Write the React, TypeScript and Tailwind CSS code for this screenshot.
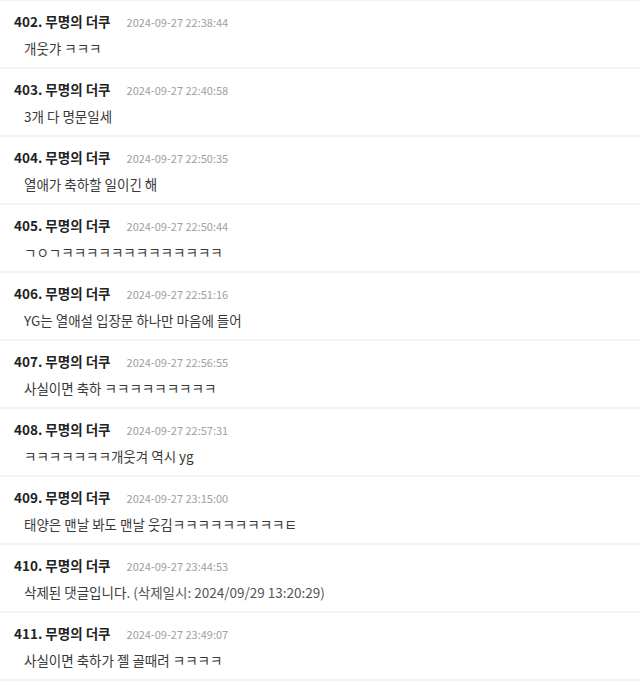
const COMMENTS = [
  { no: 402, time: "2024-09-27 22:38:44", body: "개웃갸 ㅋㅋㅋ" },
  { no: 403, time: "2024-09-27 22:40:58", body: "3개 다 명문일세" },
  { no: 404, time: "2024-09-27 22:50:35", body: "열애가 축하할 일이긴 해" },
  { no: 405, time: "2024-09-27 22:50:44", body: "ㄱㅇㄱㅋㅋㅋㅋㅋㅋㅋㅋㅋㅋㅋㅋㅋ" },
  { no: 406, time: "2024-09-27 22:51:16", body: "YG는 열애설 입장문 하나만 마음에 들어" },
  { no: 407, time: "2024-09-27 22:56:55", body: "사실이면 축하 ㅋㅋㅋㅋㅋㅋㅋㅋㅋ" },
  { no: 408, time: "2024-09-27 22:57:31", body: "ㅋㅋㅋㅋㅋㅋㅋ개웃겨 역시 yg" },
  { no: 409, time: "2024-09-27 23:15:00", body: "태양은 맨날 봐도 맨날 웃김ㅋㅋㅋㅋㅋㅋㅋㅋㅋㅌ" },
  {
    no: 410,
    time: "2024-09-27 23:44:53",
    body: "삭제된 댓글입니다.",
    deletedAt: "2024/09/29 13:20:29",
  },
  { no: 411, time: "2024-09-27 23:49:07", body: "사실이면 축하가 젤 골때려 ㅋㅋㅋㅋ" },
];

function CommentRow({ c }: { c: (typeof COMMENTS)[number] }) {
  return (
    <li className="h-[68px] border-t-2 border-[#f3f3f3] pl-[14px] pt-[10px]">
      <div className="flex items-baseline h-5 leading-5">
        <span className="text-[13.5px] font-bold text-[#222]">
          {c.no}. 무명의 더쿠
        </span>
        <span className="ml-4 text-[11px] text-[#a0a0a0]">{c.time}</span>
      </div>
      <div className="mt-[7px] pl-[10px] text-[13.5px] leading-5 text-[#3a3a3a]">
        {c.body}
        {c.deletedAt && (
          <span className="text-[#555]"> (삭제일시: {c.deletedAt})</span>
        )}
      </div>
    </li>
  );
}

export default function App() {
  return (
    <div
      className="w-[640px] h-[683px] overflow-hidden bg-white"
      style={{ fontFamily: '"Noto Sans CJK KR", "Noto Sans", sans-serif' }}
    >
      <ul className="-mt-px border-b-2 border-[#f3f3f3]">
        {COMMENTS.map((c) => (
          <CommentRow key={c.no} c={c} />
        ))}
      </ul>
    </div>
  );
}
